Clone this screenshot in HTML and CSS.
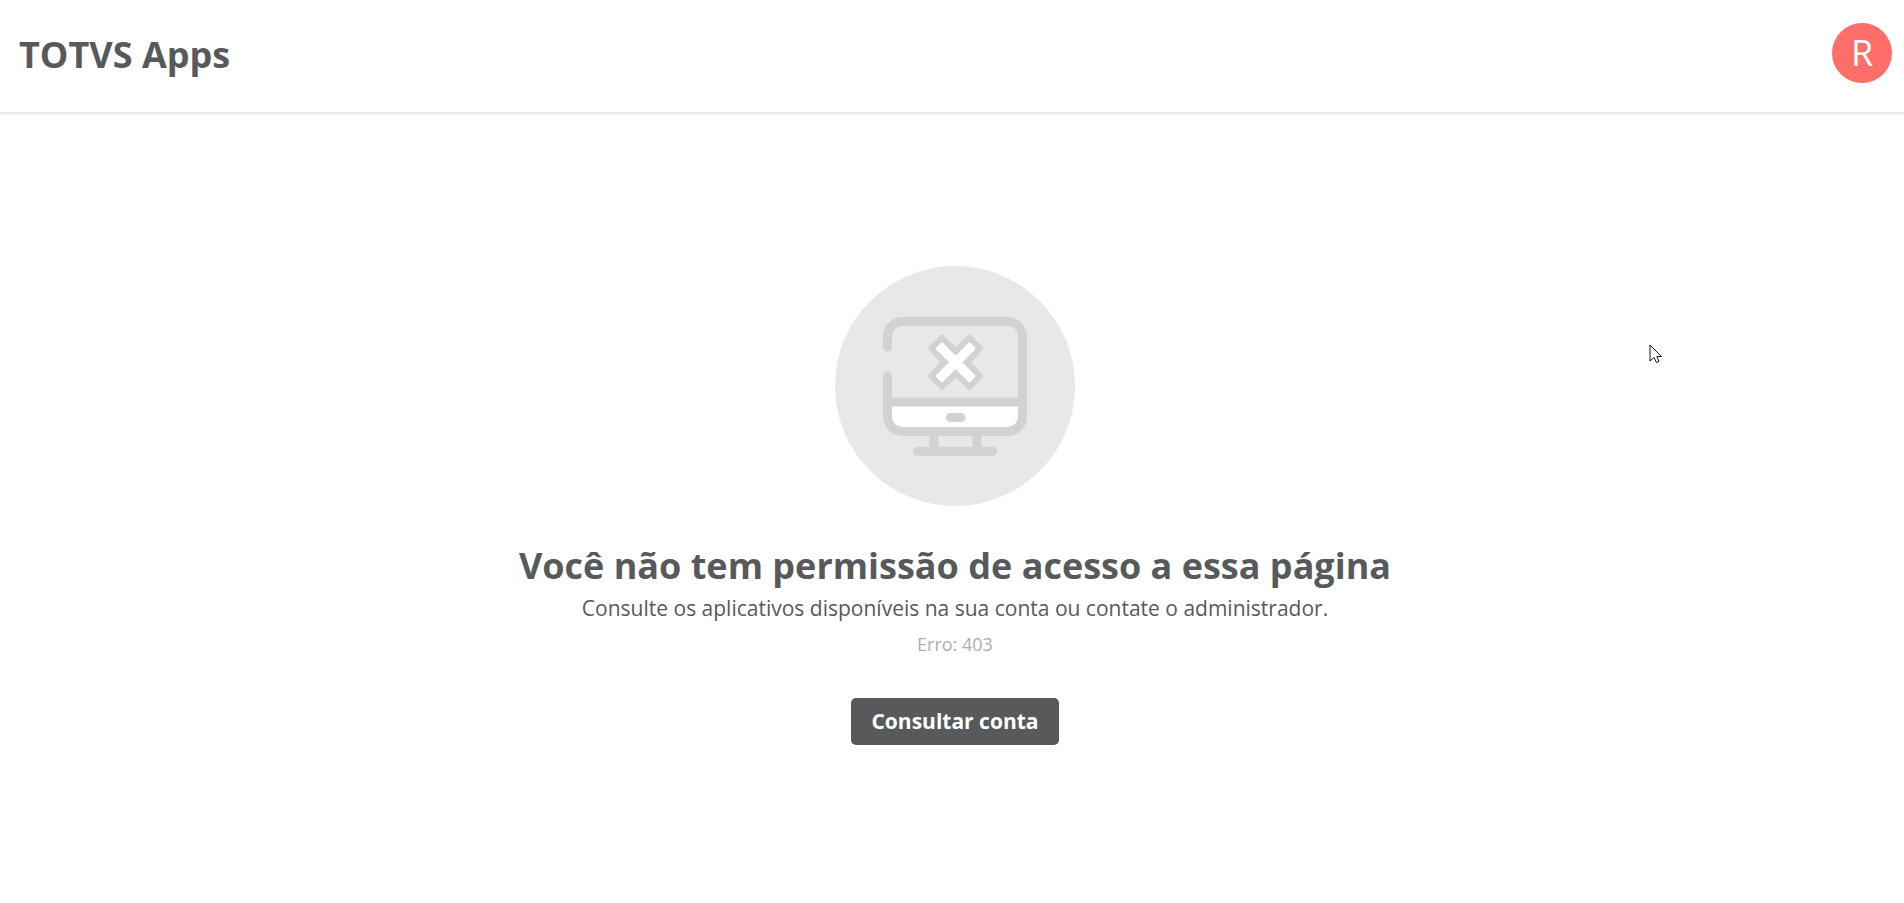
FILE: index.html
```html
<!DOCTYPE html>
<html lang="pt-BR">
<head>
    <meta charset="UTF-8">
    <meta name="viewport" content="width=device-width, initial-scale=1.0">
    <title>TOTVS Apps</title>
    <link rel="stylesheet" href="styles.css">
</head>
<body>
    <header class="header">
        <div class="header-title">TOTVS Apps</div>
        <button type="button" class="avatar">R</button>
    </header>

    <main class="error-page">
        <svg class="error-image" viewBox="0 0 240 240" aria-hidden="true">
            <circle cx="120" cy="120" r="120" fill="#e7e8ea"/>
            <path d="M53 136H187V151A15 15 0 0 1 172 166H68A15 15 0 0 1 53 151Z" fill="#fff"/>
            <g fill="none" stroke="#d0d2d4" stroke-width="9" stroke-linecap="round" stroke-linejoin="round">
                <path d="M52.500 81V70.500A15 15 0 0 1 67.500 55.500H172.500A15 15 0 0 1 187.500 70.500V150.500A15 15 0 0 1 172.500 165.500H67.500A15 15 0 0 1 52.500 150.500V110"/>
                <path d="M53 136H187M115.500 151.500H126M99 170V181M142 170V181M82.500 185.300H157.500"/>
            </g>
            <g transform="translate(120.700 96.300)" stroke-linejoin="round">
                <path d="M-13.700 -25L0 -11.900L13.700 -25L25 -13.700L11.900 0L25 13.700L13.700 25L0 11.900L-13.700 25L-25 13.700L-11.900 0L-25 -13.700Z" fill="#d0d2d4" stroke="#d0d2d4" stroke-width="5"/>
                <path d="M-13.700 -18.300L0 -4.600L13.700 -18.300L18.300 -13.700L4.600 0L18.300 13.700L13.700 18.300L0 4.600L-13.700 18.300L-18.300 13.700L-4.600 0L-18.300 -13.700Z" fill="#fff" stroke="#fff" stroke-width="3"/>
            </g>
        </svg>
        <h1 class="error-title">Você não tem permissão de acesso a essa página</h1>
        <p class="error-text">Consulte os aplicativos disponíveis na sua conta ou contate o administrador.</p>
        <p class="error-code">Erro: 403</p>
        <button type="button" class="error-button">Consultar conta</button>
    </main>

    <svg class="cursor" viewBox="0 0 14 20" aria-hidden="true">
        <path d="M1 1V17L5 13.500L7.500 18.500L10 17.300L7.800 12.500H12.500Z" fill="#fff" stroke="#15151f" stroke-width="1"/>
    </svg>
</body>
</html>
```
FILE: styles.css
```css
body {
    font-family: 'Open Sans', 'Noto Sans', sans-serif;
    background-color: #fff;
    color: #58595b;
    margin: 0;
}

.header {
    display: flex;
    align-items: center;
    justify-content: space-between;
    height: 112px;
    padding: 0 12px 6px 19px;
    box-sizing: border-box;
    box-shadow: 0 2px 3px rgba(0, 0, 0, 0.12);
}

.header-title {
    padding-top: 3px;
    font-size: 36px;
    font-weight: bold;
    line-height: 54px;
}

.avatar {
    width: 60px;
    height: 60px;
    padding: 0 0 2px;
    border: none;
    border-radius: 50%;
    background-color: #ff6e68;
    color: #fff;
    font-family: inherit;
    font-size: 36px;
    cursor: pointer;
}

.error-page {
    display: flex;
    flex-direction: column;
    align-items: center;
    padding: 154px 0 48px 6px;
    text-align: center;
}

.error-image {
    width: 240px;
    height: 240px;
    margin-bottom: 36px;
}

.error-title {
    margin: 0;
    font-size: 36px;
    font-weight: bold;
    line-height: 48px;
}

.error-text {
    margin: 0 0 6px;
    font-size: 21px;
    line-height: 36px;
}

.error-code {
    margin: 0 0 42px;
    color: #acaeb0;
    font-size: 18px;
    line-height: 24px;
}

.error-button {
    height: 47px;
    padding: 0 20px 2px;
    border: none;
    border-radius: 5px;
    background-color: #58595b;
    color: #fff;
    font-family: inherit;
    font-size: 21px;
    font-weight: bold;
    cursor: pointer;
}

/* mouse pointer over the page */
.cursor {
    position: absolute;
    top: 344px;
    left: 1649px;
    width: 14px;
    height: 20px;
}
```
